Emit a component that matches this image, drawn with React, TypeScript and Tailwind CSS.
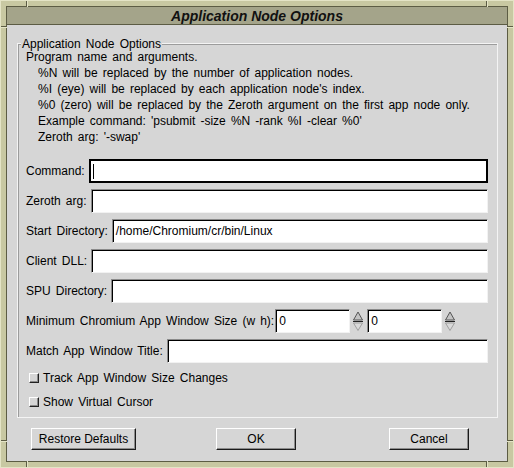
import React from 'react';

const font = "font-['Liberation_Sans',Arial,sans-serif]";

const sunken =
  'h-6 bg-white border border-t-[#8a8a8a] border-l-[#8a8a8a] border-r-[#f2f2f2] border-b-[#f2f2f2] shadow-[inset_1px_1px_0_#000] px-[3px] text-[12px] leading-[22px] text-black outline-none';

const Field: React.FC<{ label: string; value?: string; focused?: boolean }> = ({ label, value, focused }) => (
  <div className="flex items-center gap-[4px] h-6">
    <span className="whitespace-nowrap">{label}</span>
    {focused ? (
      <div className="flex-1 h-6 bg-white border-2 border-black flex items-center pl-[2px]">
        <div className="w-px h-[15px] bg-black" />
      </div>
    ) : (
      <div className={`flex-1 ${sunken}`}>{value}</div>
    )}
  </div>
);

const Spinner: React.FC = () => (
  <svg width="12" height="22" viewBox="0 0 12 22" className="shrink-0">
    <path d="M6 2 L10.5 10 L1.5 10 Z" fill="#c4c4c4" stroke="#555" strokeWidth="1" />
    <line x1="1" y1="11.5" x2="11" y2="11.5" stroke="#222" strokeWidth="1" />
    <path d="M1.5 13 L10.5 13 L6 20.5 Z" fill="#dadada" stroke="#a0a0a0" strokeWidth="1" />
  </svg>
);

const Check: React.FC<{ label: string }> = ({ label }) => (
  <div className="flex items-center h-6 pl-[3px] gap-[4px]">
    <div className="w-[10px] h-[10px] bg-[#d6d6d6] border border-t-white border-l-white border-r-[#222] border-b-[#222] shadow-[inset_-1px_-1px_0_#8a8a8a]" />
    <span>{label}</span>
  </div>
);

const Button: React.FC<{ label: string; className?: string }> = ({ label, className }) => (
  <button
    className={`h-[22px] bg-[#d6d6d6] border border-t-white border-l-white border-r-[#1a1a1a] border-b-[#1a1a1a] shadow-[inset_-1px_-1px_0_#8c8c8c] text-[12px] text-black ${className ?? ''}`}
  >
    {label}
  </button>
);

export default function App() {
  return (
    <div className={`relative w-[514px] h-[468px] bg-[#c8c8a2] border border-[#e4e4c6] p-[5px] ${font}`}>
      {/* resize notches on the frame */}
      <div className="absolute left-[25px] top-0 w-[2px] h-[6px] border-l border-[#5c5c44] bg-[#e4e4c6]" />
      <div className="absolute right-[25px] top-0 w-[2px] h-[6px] border-l border-[#5c5c44] bg-[#e4e4c6]" />
      <div className="absolute left-[25px] bottom-0 w-[2px] h-[6px] border-l border-[#5c5c44] bg-[#e4e4c6]" />
      <div className="absolute right-[25px] bottom-0 w-[2px] h-[6px] border-l border-[#5c5c44] bg-[#e4e4c6]" />
      <div className="absolute left-0 top-[25px] w-[6px] h-[2px] border-t border-[#5c5c44] bg-[#e4e4c6]" />
      <div className="absolute right-0 top-[25px] w-[6px] h-[2px] border-t border-[#5c5c44] bg-[#e4e4c6]" />
      <div className="absolute left-0 bottom-[25px] w-[6px] h-[2px] border-t border-[#5c5c44] bg-[#e4e4c6]" />
      <div className="absolute right-0 bottom-[25px] w-[6px] h-[2px] border-t border-[#5c5c44] bg-[#e4e4c6]" />

      <div className="h-full flex flex-col border border-[#5c5c44]">
        <div className="h-[18px] shrink-0 bg-[#a4a48a] border-b border-[#5c5c44] flex items-center justify-center text-[14px] font-bold italic text-[#111] leading-none">
          Application Node Options
        </div>
        <div className="flex-1 bg-[#d6d6d6] pt-[18px] pl-[10px] pr-[9px] text-[12px] text-black [word-spacing:1.8px]">
          <div className="relative border border-[#f4f4f4] shadow-[inset_1px_1px_0_#9c9c9c] pl-[8px] pr-[9px] pt-[5px] pb-[3px]">
            <span className="absolute left-[3px] -top-[6px] px-px leading-[12px] bg-[#d6d6d6]">Application Node Options</span>
            <div className="leading-[16px]">
              <div>Program name and arguments.</div>
              <div className="pl-3">
                <div>%N will be replaced by the number of application nodes.</div>
                <div>%I (eye) will be replaced by each application node's index.</div>
                <div>%0 (zero) will be replaced by the Zeroth argument on the first app node only.</div>
                <div>Example command: 'psubmit -size %N -rank %I -clear %0'</div>
                <div>Zeroth arg: '-swap'</div>
              </div>
            </div>
            <div className="mt-[14px] flex flex-col gap-[6px]">
              <Field label="Command:" focused />
              <Field label="Zeroth arg:" />
              <Field label="Start Directory:" value="/home/Chromium/cr/bin/Linux" />
              <Field label="Client DLL:" />
              <Field label="SPU Directory:" />
              <div className="flex items-center h-6">
                <span className="whitespace-nowrap mr-px">Minimum Chromium App Window Size (w h):</span>
                <div className={`w-[75px] ${sunken}`}>0</div>
                <div className="ml-[2px] mr-[3px]"><Spinner /></div>
                <div className={`w-[75px] ${sunken}`}>0</div>
                <div className="ml-[2px]"><Spinner /></div>
              </div>
              <Field label="Match App Window Title:" />
            </div>
            <div className="mt-[3px]">
              <Check label="Track App Window Size Changes" />
              <Check label="Show Virtual Cursor" />
            </div>
          </div>
          <div className="mt-[10px] flex pl-[14px] [word-spacing:0]">
            <Button label="Restore Defaults" className="w-[105px]" />
            <Button label="OK" className="w-[80px] ml-[80px]" />
            <Button label="Cancel" className="w-[80px] ml-[93px]" />
          </div>
        </div>
      </div>
    </div>
  );
}
